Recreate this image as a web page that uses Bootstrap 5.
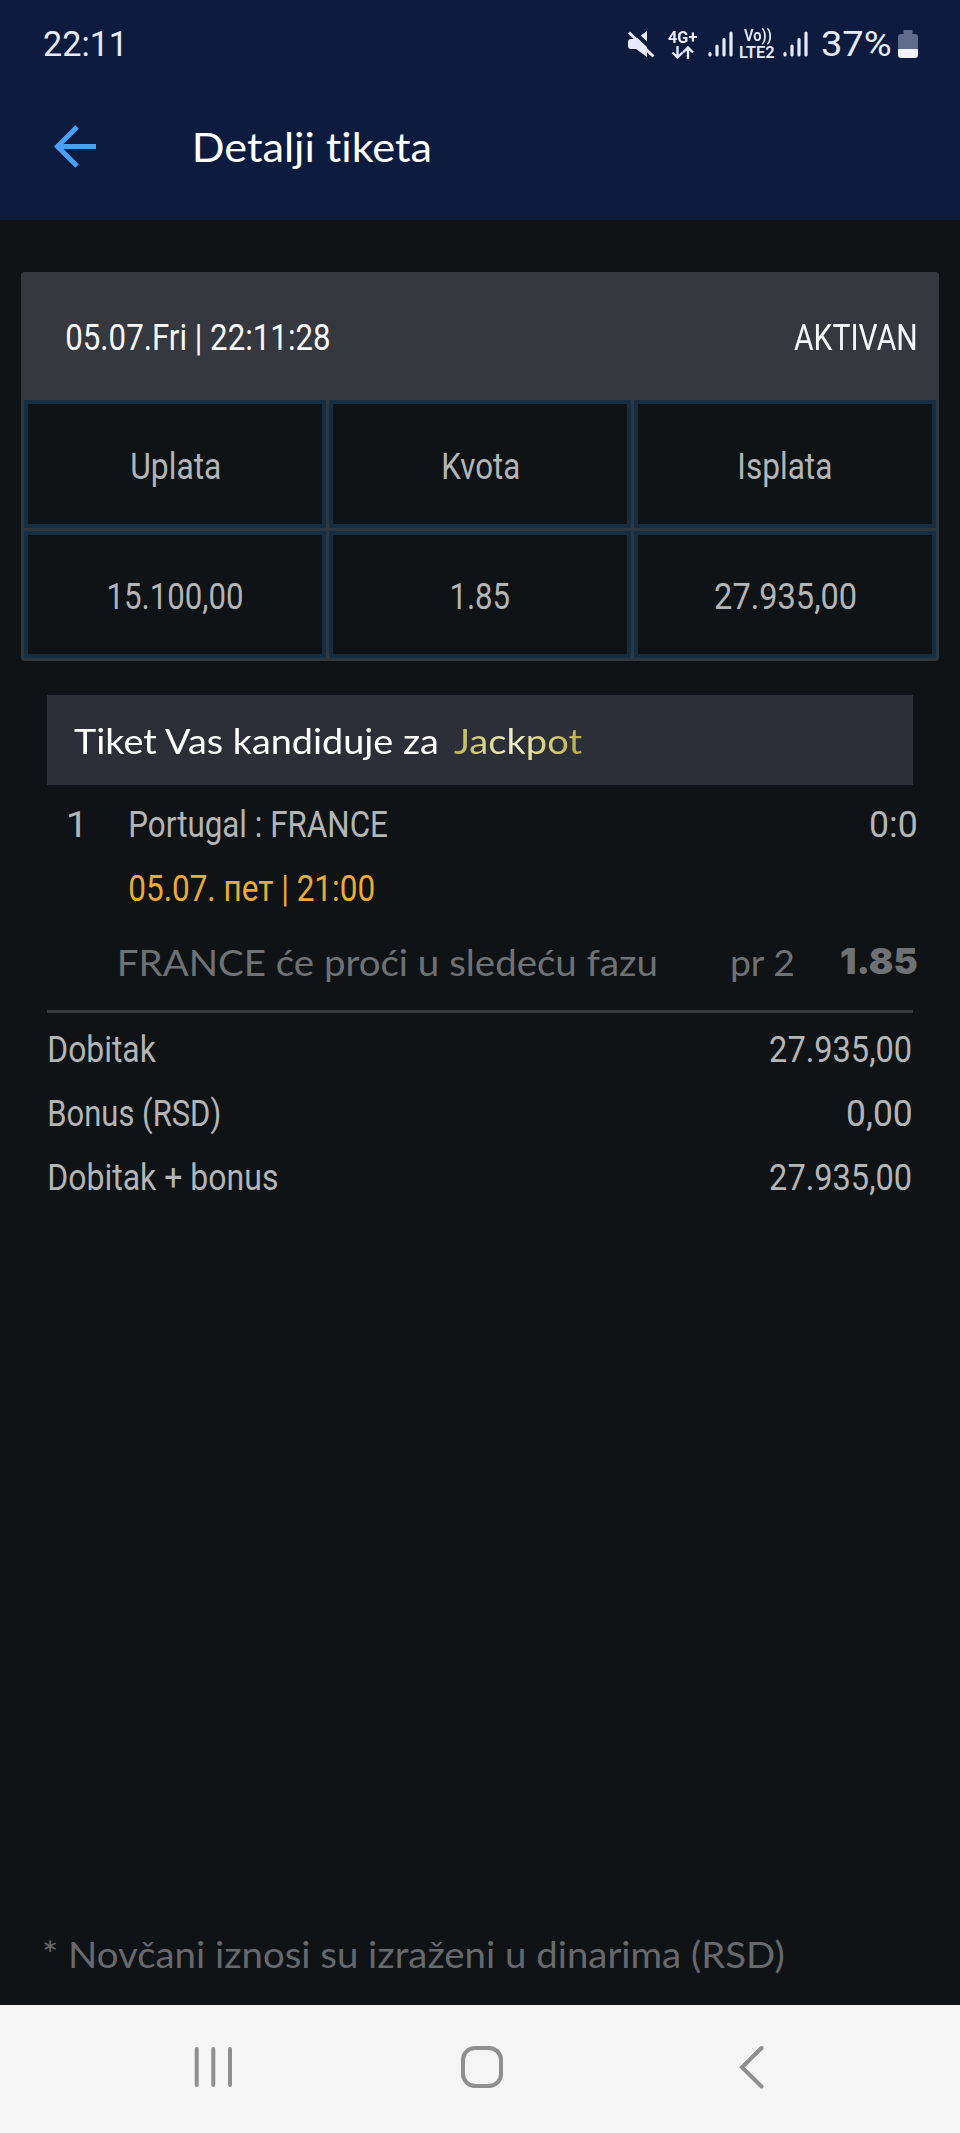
<!DOCTYPE html>
<html lang="sr-Latn">
<head>
<meta charset="utf-8">
<meta name="viewport" content="width=device-width, initial-scale=1">
<title>Detalji tiketa</title>
<link href="https://cdn.jsdelivr.net/npm/bootstrap@5.3.0/dist/css/bootstrap.min.css" rel="stylesheet">
<style>
  body { background: #0f1316; color: #b3b5b7; font: 400 36px/1 Roboto, "Noto Sans", sans-serif; font-variant-ligatures: none; }
  .screen { width: 960px; height: 2133px; overflow: hidden; }
  .wide { font-family: Lato, "Noto Sans", sans-serif; }
  .fit { display: inline-block; white-space: nowrap; transform-origin: 0 50%; }
  .top-bar { background: #0d1b3f; height: 220px; }
  .status { height: 88px; padding: 0 42px 0 44px; color: #e6eafa; font-size: 35px; }
  .net { font-size: 17px; font-weight: 700; }
  .net-4g { margin: 0 10px 0 13px; }
  .net-lte { margin: 0 8px 0 7px; font-weight: 600; }
  .charge { margin: 0 7px 0 14px; }
  .title-row { height: 116px; padding-left: 54px; color: #fff; font-size: 41.3px; }
  .title-row .fit { margin: 2px 0 0 99px; }
  .ticket { margin: 52px 21px 0; padding: 0 3px 3px; background: #2d3740; border-radius: 4px; overflow: hidden; }
  .ticket-head { height: 128px; margin: 0 -3px; padding: 3px 24px 0 45.5px; background: #36383f; color: #f6f7f9; }
  .cells { display: grid; grid-template-columns: repeat(3, 1fr); grid-template-rows: 128px 127px; gap: 3px; }
  .cells > div { background: #0f1316; border: 4px solid #152e41; padding: 5px 0 0 1.5px; }
  .detail { margin: 34px 47px 0; }
  .promo { height: 90px; background: #2c2f37; color: #fff; padding: 1px 27px 0; font-size: 35.3px; }
  .jackpot { margin-left: 15px; color: transparent; background: linear-gradient(90deg, #b9b45a 0%, #d9d88c 25%, #f2f2d2 48%, #dcd98c 65%, #b5ae45 100%); -webkit-background-clip: text; background-clip: text; line-height: 1.4; }
  .line { height: 64px; }
  .match { margin: 8px -3px 0 21.5px; }
  .no { width: 61px; }
  .when { color: #ecab33; margin-bottom: -1px; padding-left: 82.5px; }
  .pick { height: 84px; color: #6f7275; font-size: 36.3px; margin-right: -3.5px; padding-left: 72.5px; }
  .odd { margin-left: 46px; font-family: Inter, Roboto, sans-serif; font-weight: 900; font-size: 35.5px; }
  .rule { height: 3px; background: #38393d; margin: 6px 0 5px; }
  .sums { padding: 0 2px; }
  .note { color: #67696c; height: 102px; font-size: 36.3px; padding-left: 43.5px; }
  .sys-nav { height: 128px; background: #f5f5f6; }
</style>
</head>
<body>
<div class="screen d-flex flex-column">
  <header class="top-bar flex-shrink-0">
    <div class="status d-flex align-items-center">
      <span class="fit" data-w="77.5">22:11</span>
      <svg class="ms-auto" width="28" height="28" viewBox="0 0 28 28" fill="#e6eafa"><path d="M1 12Q1 9 4 9H9L20 1V27L9 19H4Q1 19 1 16Z"/><path d="M3.500 -1.500L30 24" stroke="#0d1b3f" stroke-width="4"/><path d="M2 2.500L26.500 26.500" stroke="#e6eafa" stroke-width="3"/></svg>
      <div class="net net-4g d-flex flex-column">
        <span class="fit" data-w="29">4G+</span>
        <svg width="30" height="13" viewBox="0 0 30 13" fill="none" stroke="#e6eafa" stroke-width="2.400"><path d="M9.500 0V11M4.500 6.500L9.500 11.500L14.500 6.500M20 13V2M15 6.500L20 1.500L25 6.500"/></svg>
      </div>
      <svg width="25" height="28" viewBox="0 0 25 28" stroke="#e6eafa" stroke-width="3.200" stroke-linecap="round"><path d="M2 23.500V25M9 16V25M16 9.500V25M23 3V25"/></svg>
      <div class="net net-lte d-flex flex-column align-items-center">
        <span class="fit" data-w="27">Vo))</span>
        <span class="fit" data-w="35">LTE2</span>
      </div>
      <svg width="25" height="28" viewBox="0 0 25 28" stroke="#e6eafa" stroke-width="3.200" stroke-linecap="round"><path d="M2 23.500V25M9 16V25M16 9.500V25M23 3V25"/></svg>
      <div class="charge"><span class="fit" data-w="69">37%</span></div>
      <svg width="20" height="28" viewBox="0 0 20 28"><path d="M5.500 0H14.500V4H17Q20 4 20 7V19H0V7Q0 4 3 4H5.500Z" fill="#616b8c"/><path d="M0 19H20V25Q20 28 17 28H3Q0 28 0 25Z" fill="#f0f2fa"/></svg>
    </div>
    <div class="title-row d-flex align-items-center wide">
      <svg width="42" height="43" viewBox="0 0 42 43" fill="none" stroke="#4aa0f8" stroke-width="5"><path d="M42 21.500H4M23 2L3.500 21.500L23 41"/></svg>
      <span class="fit" data-w="235">Detalji tiketa</span>
    </div>
  </header>

  <main class="flex-grow-1">
    <section class="ticket">
      <div class="ticket-head d-flex align-items-center justify-content-between">
        <span class="fit" data-w="262.5">05.07.Fri | 22:11:28</span>
        <span class="fit" data-w="121.5">AKTIVAN</span>
      </div>
      <div class="cells">
        <div class="d-flex align-items-center justify-content-center"><span class="fit" data-w="88">Uplata</span></div>
        <div class="d-flex align-items-center justify-content-center"><span class="fit" data-w="76">Kvota</span></div>
        <div class="d-flex align-items-center justify-content-center"><span class="fit" data-w="91">Isplata</span></div>
        <div class="d-flex align-items-center justify-content-center"><span class="fit" data-w="133.5">15.100,00</span></div>
        <div class="d-flex align-items-center justify-content-center"><span class="fit" data-w="57">1.85</span></div>
        <div class="d-flex align-items-center justify-content-center"><span class="fit" data-w="141">27.935,00</span></div>
      </div>
    </section>

    <section class="detail">
      <div class="promo d-flex align-items-center wide">
        <span class="fit" data-w="364.5">Tiket Vas kandiduje za</span>
        <span class="fit jackpot" data-w="128.5">Jackpot</span>
      </div>
      <div class="line match d-flex align-items-center">
        <span class="no"><span class="fit" data-w="11">1</span></span>
        <span class="fit" data-w="257.5">Portugal : FRANCE</span>
        <span class="fit ms-auto" data-w="45.5">0:0</span>
      </div>
      <div class="line when d-flex align-items-center">
        <span class="fit" data-w="244">05.07. пет | 21:00</span>
      </div>
      <div class="pick d-flex align-items-center wide">
        <span class="fit" data-w="535.5">FRANCE će proći u sledeću fazu</span>
        <span class="fit ms-auto" data-w="62.5">pr 2</span>
        <div class="odd"><span class="fit" data-w="76">1.85</span></div>
      </div>
      <div class="rule"></div>
      <div class="sums">
        <div class="line d-flex align-items-center justify-content-between"><span class="fit" data-w="107.5">Dobitak</span><span class="fit" data-w="141">27.935,00</span></div>
        <div class="line d-flex align-items-center justify-content-between"><span class="fit" data-w="170">Bonus (RSD)</span><span class="fit" data-w="63.5">0,00</span></div>
        <div class="line d-flex align-items-center justify-content-between"><span class="fit" data-w="228">Dobitak + bonus</span><span class="fit" data-w="141">27.935,00</span></div>
      </div>
    </section>
  </main>

  <footer class="flex-shrink-0">
    <div class="note wide d-flex align-items-center"><span class="fit" data-w="740">* Novčani iznosi su izraženi u dinarima (RSD)</span></div>
    <nav class="sys-nav">
      <svg width="960" height="128" viewBox="0 0 960 128" fill="none" stroke="#8f8f8f" stroke-width="4" stroke-linecap="round">
        <path d="M196.700 44V80M213.300 44V80M230 44V80"/>
        <rect x="463" y="43" width="38" height="38" rx="12"/>
        <path d="M761.500 43L742 62.300L761.500 81.500"/>
      </svg>
    </nav>
  </footer>
</div>
<script src="https://cdn.jsdelivr.net/npm/bootstrap@5.3.0/dist/js/bootstrap.bundle.min.js"></script>
<script>
  // Condense each label so that its drawn width equals data-w
  const pen = document.createElement('canvas').getContext('2d');
  document.querySelectorAll('.fit').forEach(el => {
    const cs = getComputedStyle(el);
    pen.font = `${cs.fontWeight} ${cs.fontSize} ${cs.fontFamily}`;
    const m = pen.measureText(el.textContent);
    const ink = m.actualBoundingBoxLeft + m.actualBoundingBoxRight;
    const w = +el.dataset.w, s = w / ink;
    const natural = el.getBoundingClientRect().width;
    el.style.width = natural + 'px';
    el.style.flex = 'none';
    el.style.transform = `translateX(${m.actualBoundingBoxLeft * s}px) scaleX(${s})`;
    el.style.marginRight = (w - natural) + 'px';
  });
</script>
</body>
</html>
